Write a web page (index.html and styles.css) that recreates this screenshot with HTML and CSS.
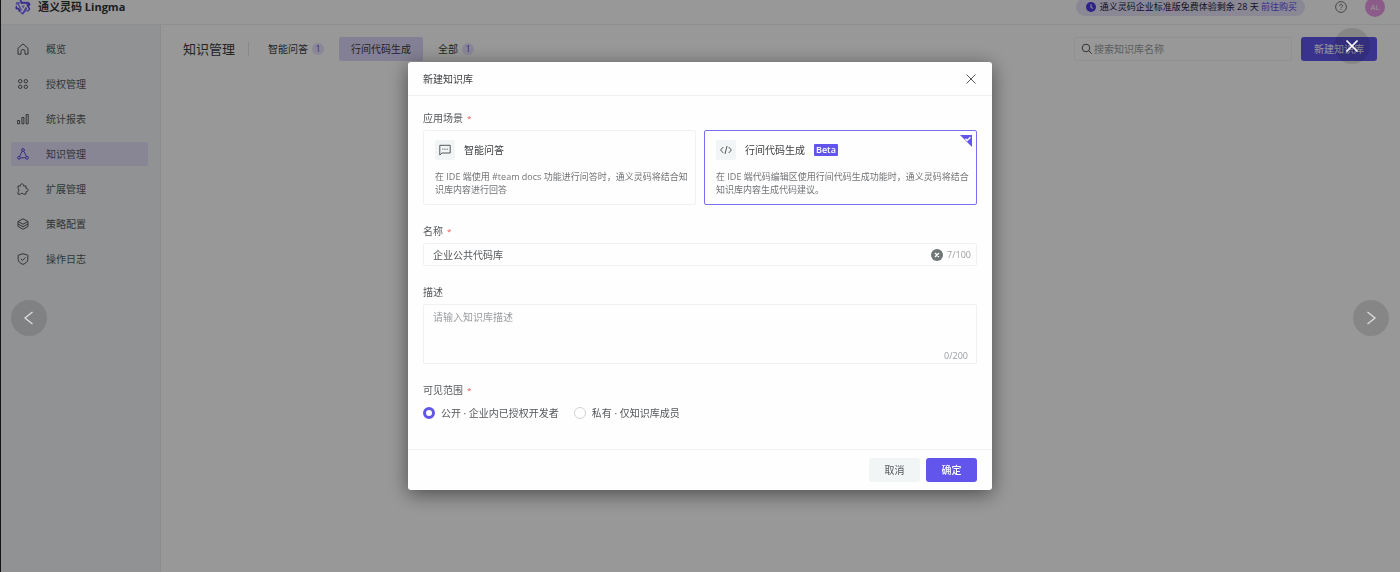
FILE: index.html
```html
<!DOCTYPE html>
<html lang="zh-CN">
<head>
	<meta charset="utf-8">
	<meta name="viewport" content="width=device-width, initial-scale=1.0">
	<title>通义灵码 Lingma</title>
	<link rel="stylesheet" href="styles.css">
</head>
<body>
	<header class="topbar">
		<a class="brand" href="#">
			<svg class="logo" viewBox="0 0 16 16" aria-hidden="true">
				<path fill="#6a5cf5" d="M4.500 1.500L6 .5l1.500 2.300h6L12.500 5H5.800z"/>
				<path fill="#5a48e0" d="M12.800 3.200l1.600.2 1.100 2-1.400 2.200 1.200 2.300-1.500 2.300-1.300-.1 1.200-2.200-2.600-4.500h1.200z"/>
				<path fill="#7d6cff" d="M13 12.400h-2.700l-1.700 2.900H6.500L5.300 13.200h2.400L11 7.600l1.300 2.200-1 1.700h2z"/>
				<path fill="#5a48e0" d="M5.500 13.500L4 12.800 2.800 10.500.7 10.300l-.4-2L1.400 6.600l1.400 2.500H4l1.700 2.600z"/>
				<path fill="#8d80ff" d="M.4 5.500L1.500 3h2.800l.9 1.700-1.400.2 3.500 6-1.300 1.200L2.600 5.700z"/>
				<path fill="#8d80ff" d="M6.500 6.500h3.400L8.200 9.600z"/>
			</svg>
			通义灵码 Lingma
		</a>
		<div class="trial">
			<svg class="clock" viewBox="0 0 10 10" aria-hidden="true">
				<circle cx="5" cy="5" r="5" fill="#4b3be0"/>
				<path d="M5 2.300V5.300L6.800 6.500" fill="none" stroke="#e4deff" stroke-width="1.200"/>
			</svg>
			<span>通义灵码企业标准版免费体验剩余 28 天 <a href="#">前往购买</a></span>
		</div>
		<button class="help" type="button" aria-label="帮助">
			<svg viewBox="0 0 12 12" class="line">
				<circle cx="6" cy="6" r="5.400"/>
				<path d="M4.500 4.800a1.500 1.500 0 1 1 2.200 1.300c-.5.3-.7.5-.7 1.100M6 8.100v.9"/>
			</svg>
		</button>
		<button class="avatar" type="button">AL</button>
	</header>

	<div class="page">
		<nav class="sidebar">
			<a href="#">
				<svg class="line" viewBox="0 0 12 12"><path d="M1 5.200L6 .9l5 4.300v6H8V8.500a2 2 0 0 0-4 0v2.700H1z"/></svg>
				概览
			</a>
			<a href="#">
				<svg class="line" viewBox="0 0 12 12"><circle cx="3.200" cy="3.200" r="1.700"/><circle cx="8.800" cy="3.200" r="1.700"/><circle cx="3.200" cy="8.800" r="1.700"/><circle cx="8.800" cy="8.800" r="1.700"/></svg>
				授权管理
			</a>
			<a href="#">
				<svg class="line" viewBox="0 0 12 12"><path d="M.6 7.500h2v3.300h-2zM4.900 4.500h2v6.300h-2zM9.200 1.500h2v9.300h-2z"/></svg>
				统计报表
			</a>
			<a class="active" href="#">
				<svg class="line" viewBox="0 0 12 12"><circle cx="6" cy="2" r="1.400"/><circle cx="2" cy="9.800" r="1.400"/><circle cx="10" cy="9.800" r="1.400"/><path d="M5.200 3.300L2.500 8.400M6.800 3.300l2.700 5.100M3.500 9.800h5"/></svg>
				知识管理
			</a>
			<a href="#">
				<svg class="line" viewBox="0 0 12 12"><path d="M1 3h2.500a1.600 1.600 0 1 1 3 0H9v2.600a1.600 1.600 0 1 1 0 3v2.600H6.400a1.500 1.500 0 0 0-2.800 0H1V8.500a1.500 1.500 0 0 0 0-2.800z"/></svg>
				扩展管理
			</a>
			<a href="#">
				<svg class="line" viewBox="0 0 12 12"><path d="M6 .8l5 2.700-5 2.700-5-2.700zM1 6l5 2.700L11 6M1 8.500l5 2.700 5-2.700M1 3.500v5M11 3.500v5"/></svg>
				策略配置
			</a>
			<a href="#">
				<svg class="line" viewBox="0 0 12 12"><path d="M6 .7l4.800 1.500v4.300c0 2.200-2 3.800-4.800 4.900C3.200 10.300 1.200 8.700 1.200 6.500V2.200zM3.800 5.800l1.700 1.600 2.900-2.900"/></svg>
				操作日志
			</a>
		</nav>

		<main class="content">
			<div class="toolbar">
				<h1>知识管理</h1>
				<div class="tabs">
					<button type="button">智能问答 <span class="num">1</span></button>
					<button type="button" class="active">行间代码生成</button>
					<button type="button">全部 <span class="num">1</span></button>
				</div>
				<label class="search">
					<svg class="line" viewBox="0 0 12 12" aria-hidden="true"><circle cx="5" cy="5" r="3.800"/><path d="M7.800 7.800L10.800 10.800"/></svg>
					<input type="search" placeholder="搜索知识库名称" aria-label="搜索知识库名称">
				</label>
				<button type="button" class="btn primary create">新建知识库</button>
			</div>
		</main>
	</div>

	<div class="mask">
		<form class="modal" role="dialog" aria-labelledby="modal-title">
			<div class="modal-head">
				<h2 id="modal-title">新建知识库</h2>
				<button type="button" class="close" aria-label="关闭">
					<svg class="line" viewBox="0 0 12 12"><path d="M1.500 1.500l9 9M10.500 1.500l-9 9"/></svg>
				</button>
			</div>

			<div class="modal-body">
				<fieldset class="field">
					<legend class="required">应用场景</legend>
					<div class="scenes">
						<label class="scene">
							<input type="radio" name="scene">
							<span class="scene-title">
								<span class="scene-icon">
									<svg class="line" viewBox="0 0 12 12"><path d="M.8 1.300h10.400v7.700H3L.8 11z"/><path d="M3.200 5.200h1.200M5.400 5.200h1.200M7.600 5.200h1.200"/></svg>
								</span>
								智能问答
							</span>
							<span class="scene-desc">在 IDE 端使用 #team docs 功能进行问答时，通义灵码将结合知识库内容进行回答</span>
						</label>
						<label class="scene checked">
							<input type="radio" name="scene" checked>
							<span class="scene-title">
								<span class="scene-icon">
									<svg class="line" viewBox="0 0 12 12"><path d="M3.300 3L.6 6l2.700 3M8.700 3l2.700 3-2.700 3M7 2L5 10"/></svg>
								</span>
								行间代码生成
								<span class="beta">Beta</span>
							</span>
							<span class="scene-desc">在 IDE 端代码编辑区使用行间代码生成功能时，通义灵码将结合知识库内容生成代码建议。</span>
							<svg class="corner" viewBox="0 0 12 12" aria-hidden="true"><path d="M0 0h12v12z" fill="#6155ec"/><path d="M5.400 3.700l1.800 1.800 3.200-3.200" fill="none" stroke="#fff" stroke-width="1.400"/></svg>
						</label>
					</div>
				</fieldset>

				<div class="field">
					<label class="required" for="name">名称</label>
					<div class="box">
						<input id="name" type="text" value="企业公共代码库" maxlength="100">
						<button type="button" class="clear" aria-label="清空">
							<svg viewBox="0 0 12 12"><circle cx="6" cy="6" r="6" fill="#6f7677"/><path d="M4 4l4 4M8 4L4 8" stroke="#fff" stroke-width="1.400"/></svg>
						</button>
						<span class="count">7/100</span>
					</div>
				</div>

				<div class="field">
					<label for="desc">描述</label>
					<div class="box area">
						<textarea id="desc" placeholder="请输入知识库描述" maxlength="200"></textarea>
						<span class="count">0/200</span>
					</div>
				</div>

				<fieldset class="field">
					<legend class="required">可见范围</legend>
					<div class="radios">
						<label><input type="radio" name="scope" checked>公开 · 企业内已授权开发者</label>
						<label><input type="radio" name="scope">私有 · 仅知识库成员</label>
					</div>
				</fieldset>
			</div>

			<div class="modal-foot">
				<button type="button" class="btn">取消</button>
				<button type="button" class="btn primary">确定</button>
			</div>
		</form>
	</div>

	<button type="button" class="viewer viewer-close" aria-label="关闭预览">
		<svg viewBox="0 0 14 14"><path d="M1.500 1.500l11 11M12.500 1.500l-11 11"/></svg>
	</button>
	<button type="button" class="viewer viewer-prev" aria-label="上一张">
		<svg viewBox="0 0 14 14"><path d="M10.500 1L3 7l7.500 6"/></svg>
	</button>
	<button type="button" class="viewer viewer-next" aria-label="下一张">
		<svg viewBox="0 0 14 14"><path d="M3.500 1L11 7l-7.500 6"/></svg>
	</button>
</body>
</html>
```

FILE: styles.css
```css
* {
	box-sizing: border-box;
}
body {
	margin: 0;
	height: 100vh;
	display: flex;
	flex-direction: column;
	overflow: hidden;
	border-left: 1px solid #222;
	background: #fdfdfd;
	color: #55585b;
	font-family: "Open Sans", "Noto Sans CJK SC", sans-serif;
	font-size: 10px;
	line-height: 14px;
}
button, input, textarea {
	margin: 0;
	padding: 0;
	border: 0;
	background: none;
	color: inherit;
	font: inherit;
}
a {
	color: inherit;
	text-decoration: none;
}
h1, h2 {
	margin: 0;
	font-weight: normal;
}
svg {
	display: block;
	width: 12px;
	height: 12px;
	flex: none;
}
.line {
	fill: none;
	stroke: currentColor;
	stroke-width: 1;
	stroke-linejoin: round;
}

/* top bar, partly scrolled out of view */
.topbar {
	display: flex;
	align-items: center;
	height: 36px;
	margin-top: -11px;
	padding: 0 15px 0 14px;
	border-bottom: 1px solid #edeff0;
	flex: none;
}
.brand {
	display: flex;
	align-items: center;
	gap: 7px;
	margin-right: auto;
	color: #303235;
	font-size: 11px;
	font-weight: bold;
}
.logo {
	width: 16px;
	height: 16px;
}
.trial {
	display: flex;
	align-items: center;
	gap: 4px;
	height: 18px;
	padding: 0 8px 0 10px;
	border-radius: 9px;
	background: #e6e3f8;
	color: #1d1a3a;
	font-size: 9px;
}
.trial a {
	color: #5a4be8;
}
.clock {
	width: 10px;
	height: 10px;
}
.help {
	margin: 0 18px 0 30px;
	color: #77797c;
}
.avatar {
	width: 20px;
	height: 20px;
	border-radius: 50%;
	background: #e998e4;
	color: #fff;
	font-size: 8px;
}

.page {
	display: flex;
	flex: 1;
}
.sidebar {
	display: flex;
	flex-direction: column;
	gap: 11px;
	width: 160px;
	padding: 12px 12px 12px 10px;
	border-right: 1px solid #e8ebec;
	background: #f0f3f5;
}
.sidebar a {
	display: flex;
	align-items: center;
	gap: 17px;
	height: 24px;
	padding: 0 6px;
	border-radius: 2px;
}
.sidebar .active {
	background: #e3dff9;
}
.sidebar .active svg {
	color: #5a48e0;
}

.content {
	flex: 1;
	padding: 12px 23px 12px 22px;
}
.toolbar {
	display: flex;
	align-items: center;
}
.toolbar h1 {
	padding-right: 13px;
	border-right: 1px solid #e3e5e6;
	color: #3a3c3f;
	font-size: 13px;
}
.tabs {
	display: flex;
	gap: 3px;
	margin: 0 auto 0 7px;
	color: #3a3c3f;
}
.tabs button {
	display: flex;
	align-items: center;
	gap: 4px;
	height: 24px;
	padding: 0 12px;
	border-radius: 2px;
}
.tabs .active {
	background: #dbd6f8;
}
.num {
	width: 12px;
	height: 12px;
	border-radius: 6px;
	background: #e6e1fb;
	color: #5a4be8;
	font-size: 9px;
	line-height: 12px;
}
.search {
	display: flex;
	align-items: center;
	gap: 1px;
	width: 218px;
	height: 24px;
	margin-right: 9px;
	padding: 0 6px;
	border: 1px solid #f0f2f3;
	border-radius: 2px;
}
.search input {
	flex: 1;
	min-width: 0;
	outline: 0;
}
::placeholder {
	color: #9a9da0;
	opacity: 1;
}
.btn {
	min-width: 51px;
	height: 24px;
	border-radius: 3px;
	background: #f2f5f6;
}
.primary {
	background: #6155ec;
	color: #fff;
}
.create {
	width: 76px;
}
.modal-foot .primary {
	font-weight: 500;
}

/* dialog */
.mask {
	position: fixed;
	inset: 0;
	display: flex;
	align-items: flex-start;
	justify-content: center;
	padding-top: 62px;
	background: rgba(0, 0, 0, .4);
}
.modal {
	width: 584px;
	max-width: 90%;
	border-radius: 3px;
	background: #fefefe;
	box-shadow: 0 4px 20px rgba(0, 0, 0, .5);
}
.modal-head {
	display: flex;
	align-items: center;
	justify-content: space-between;
	height: 34px;
	padding: 0 15px;
	border-bottom: 1px solid #eef0f1;
}
.modal-head h2 {
	color: #3a3c3f;
	font-size: 10px;
}
.modal-body {
	display: flex;
	flex-direction: column;
	gap: 19px;
	padding: 15px 15px 25px;
}
.field {
	min-width: 0;
	margin: 0;
	padding: 0;
	border: 0;
}
.field > label, .field > legend {
	display: block;
	margin-bottom: 5px;
	padding: 0;
}
.required::after {
	content: "*";
	margin-left: 4px;
	color: #f0554e;
	font-size: 8px;
	vertical-align: top;
}
.scenes {
	display: grid;
	grid-template-columns: 1fr 1fr;
	gap: 8px;
}
.scene {
	position: relative;
	padding: 9px 6px 8px 11px;
	border: 1px solid #f0f1f2;
	border-radius: 2px;
}
.scene.checked {
	border-color: #7a6ff0;
}
.scene input {
	position: absolute;
	opacity: 0;
}
.scene-title {
	display: flex;
	align-items: center;
	gap: 9px;
	color: #3a3c3f;
}
.scene-icon {
	display: grid;
	place-items: center;
	width: 20px;
	height: 20px;
	border-radius: 2px;
	background: #f2f5f6;
	color: #55585b;
}
.scene-desc {
	display: block;
	margin-top: 10px;
	color: #707376;
	font-size: 9px;
	line-height: 13px;
}
.beta {
	padding: 0 2px;
	border-radius: 1px;
	background: #6155ec;
	color: #fff;
	font-size: 9px;
	font-weight: 600;
	line-height: 12px;
}
.corner {
	position: absolute;
	top: 4px;
	right: 4px;
}
.box {
	display: flex;
	align-items: center;
	height: 23px;
	padding: 0 5px 0 9px;
	border: 1px solid #f0f1f2;
	border-radius: 2px;
}
.box input {
	flex: 1;
	outline: 0;
}
.clear {
	margin-right: 4px;
}
.count {
	color: #9a9da0;
	font-size: 9px;
}
.area {
	height: 60px;
	padding: 5px 8px 0 9px;
	align-items: stretch;
}
.area textarea {
	flex: 1;
	outline: 0;
	resize: none;
}
.area .count {
	align-self: flex-end;
}
.radios {
	display: flex;
	gap: 15px;
	height: 22px;
}
.radios label {
	display: flex;
	align-items: center;
	gap: 6px;
}
.radios input {
	appearance: none;
	width: 12px;
	height: 12px;
	border: 1px solid #d0d3d5;
	border-radius: 50%;
}
.radios input:checked {
	border: 3px solid #6155ec;
}
.modal-foot {
	display: flex;
	justify-content: flex-end;
	gap: 6px;
	padding: 8px 15px;
	border-top: 1px solid #eef0f1;
}

/* image viewer controls */
.viewer {
	position: fixed;
	display: grid;
	place-items: center;
	width: 36px;
	height: 36px;
	border-radius: 50%;
	background: rgba(0, 0, 0, .12);
}
.viewer svg {
	width: 14px;
	height: 14px;
	fill: none;
	stroke: #ddd;
	stroke-width: 1.300;
}
.viewer-close {
	top: 28px;
	right: 30px;
}
.viewer-close svg {
	stroke: #fff;
	stroke-width: 1.700;
}
.viewer-prev {
	top: calc(50% + 14px);
	left: 11px;
}
.viewer-next {
	top: calc(50% + 14px);
	right: 11px;
}
```
